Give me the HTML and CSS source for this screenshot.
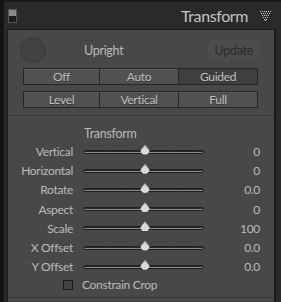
FILE: index.html
```html
<!DOCTYPE html>
<html>
<head>
<meta charset="utf-8">
<link rel="stylesheet" href="styles.css">
</head>
<body>
<div class="app">
  <div class="header">
    <span class="toggle"></span>
    <span class="title">Transform</span>
    <svg class="tri" width="11" height="10" viewBox="0 0 11 10">
      <g fill="#d8d8d8">
        <rect x="0" y="0" width="1" height="1"/><rect x="2" y="0" width="1" height="1"/><rect x="4" y="0" width="1" height="1"/><rect x="6" y="0" width="1" height="1"/><rect x="8" y="0" width="1" height="1"/><rect x="10" y="0" width="1" height="1"/>
        <rect x="1" y="2" width="1" height="1"/><rect x="3" y="2" width="1" height="1"/><rect x="5" y="2" width="1" height="1"/><rect x="7" y="2" width="1" height="1"/><rect x="9" y="2" width="1" height="1"/>
        <rect x="2" y="4" width="1" height="1"/><rect x="4" y="4" width="1" height="1"/><rect x="6" y="4" width="1" height="1"/><rect x="8" y="4" width="1" height="1"/>
        <rect x="3" y="6" width="1" height="1"/><rect x="5" y="6" width="1" height="1"/><rect x="7" y="6" width="1" height="1"/>
        <rect x="4" y="8" width="1" height="1"/><rect x="6" y="8" width="1" height="1"/>
        <rect x="5" y="9" width="1" height="1"/>
      </g>
    </svg>
  </div>
  <div class="panel">
    <div class="upright-row">
      <span class="circle"></span>
      <span class="upright">Upright</span>
      <span class="update">Update</span>
    </div>
    <div class="seg">
      <span class="btn">Off</span><span class="btn">Auto</span><span class="btn sel">Guided</span>
    </div>
    <div class="seg">
      <span class="btn">Level</span><span class="btn">Vertical</span><span class="btn">Full</span>
    </div>
    <div class="sep"></div>
    <div class="subhead">Transform</div>
    <div class="sliders">
      <span class="lbl">Vertical</span><span class="track"><span class="thumb"></span></span><span class="val">0</span>
      <span class="lbl">Horizontal</span><span class="track"><span class="thumb"></span></span><span class="val">0</span>
      <span class="lbl">Rotate</span><span class="track"><span class="thumb"></span></span><span class="val">0.0</span>
      <span class="lbl">Aspect</span><span class="track"><span class="thumb"></span></span><span class="val">0</span>
      <span class="lbl">Scale</span><span class="track"><span class="thumb"></span></span><span class="val">100</span>
      <span class="lbl">X Offset</span><span class="track"><span class="thumb"></span></span><span class="val">0.0</span>
      <span class="lbl">Y Offset</span><span class="track"><span class="thumb"></span></span><span class="val">0.0</span>
    </div>
    <div class="check"><span class="box"></span><span>Constrain Crop</span></div>
    <div class="panel-end"></div>
  </div>
</div>
</body>
</html>
```

FILE: styles.css
```css
html, body {
  margin: 0;
  padding: 0;
}
body {
  width: 281px;
  height: 302px;
  overflow: hidden;
  background: #2a2a2a;
  font-family: Lato, "Open Sans", sans-serif;
}
.app {
  height: 302px;
  box-sizing: border-box;
  border-left: 4px solid #141414;
  border-top: 2px solid #1a1a1a;
  display: flex;
  flex-direction: column;
}
.header {
  height: 27px;
  display: flex;
  align-items: center;
  padding: 0 10px 0 4px;
  flex: none;
}
.toggle {
  width: 7px;
  height: 12px;
  border: 1px solid #555;
  background: linear-gradient(#8a8a8a 0 50%, #1c1c1c 50% 100%);
  box-sizing: content-box;
}
.title {
  margin-left: auto;
  font-size: 16px;
  letter-spacing: -0.4px;
  color: #c4c4c4;
  margin-right: 12px;
}
.tri {
  display: block;
}
.panel {
  margin-left: 3px;
  width: 266px;
  border: 1px solid #1c1c1c;
  border-right-width: 2px;
  border-bottom: none;
  background: #484848;
  flex: 1;
  display: flex;
  flex-direction: column;
  color: #bababa;
  font-size: 12px;
  letter-spacing: -0.3px;
}
.upright-row {
  display: flex;
  align-items: center;
  height: 26px;
  margin-top: 7px;
  padding-left: 12px;
}
.circle {
  width: 24px;
  height: 24px;
  border-radius: 50%;
  border: 1px solid #3a3a3a;
  background: #424242;
}
.upright {
  margin-left: 38px;
  font-size: 12.5px;
}
.update {
  margin-left: auto;
  margin-right: 14px;
  padding: 3px 7px;
  border-radius: 5px;
  background: #4c4c4c;
  color: #2a2a2a;
  font-size: 12.5px;
}
.seg {
  display: grid;
  grid-template-columns: 77px 79px 79px;
  margin: 5px 0 0 15px;
  height: 17px;
}
.seg + .seg {
  margin-top: 6px;
}
.btn {
  border: 1px solid #262626;
  border-left: none;
  background: #515151;
  box-shadow: inset 0 1px 0 #5c5c5c;
  display: flex;
  align-items: center;
  justify-content: center;
  font-size: 12px;
  color: #c0c0c0;
  text-shadow: 0 1px 0 #333;
}
.btn:first-child {
  border-left: 1px solid #262626;
}
.btn.sel {
  background: #3f3f3f;
  box-shadow: none;
}
.sep {
  height: 1px;
  background: #3a3a3a;
  margin-top: 7px;
}
.subhead {
  margin: 9px 0 0 76px;
  font-size: 12.5px;
  height: 18px;
  line-height: 18px;
}
.sliders {
  display: grid;
  grid-template-columns: 65px 121px 1fr;
  grid-auto-rows: 19.2px;
  column-gap: 10px;
  align-items: center;
  padding-right: 14px;
  margin-top: -1px;
}
.lbl, .val {
  text-align: right;
  font-size: 12px;
  line-height: 19px;
}
.track {
  position: relative;
  height: 4px;
  border-radius: 3px;
  background: #8a8a8a;
  border: 1px solid #1e1e1e;
  box-sizing: border-box;
  box-shadow: inset 0 1px 0 #2a2a2a;
}
.track::before {
  content: "";
  position: absolute;
  left: 5px;
  right: 4px;
  top: -5px;
  height: 1px;
  background: repeating-linear-gradient(90deg, #383838 0 1px, transparent 1px 12.5px);
}
.thumb {
  position: absolute;
  left: 56px;
  top: -6px;
  width: 10px;
  height: 10px;
  background: radial-gradient(circle at 50% 70%, #dadada 0 40%, #a8a8a8 75%);
  clip-path: path("M5 0 L9.5 6 A4.5 4 0 0 1 0.5 6 Z");
}
.check {
  display: flex;
  align-items: center;
  margin: 0 0 0 55px;
  height: 17px;
}
.box {
  width: 8px;
  height: 8px;
  border: 1px solid #1a1a1a;
  background: #444;
  margin-right: 9px;
}
.panel-end {
  margin-top: auto;
  height: 4px;
  border-top: 1px solid #3a3a3a;
}
```
